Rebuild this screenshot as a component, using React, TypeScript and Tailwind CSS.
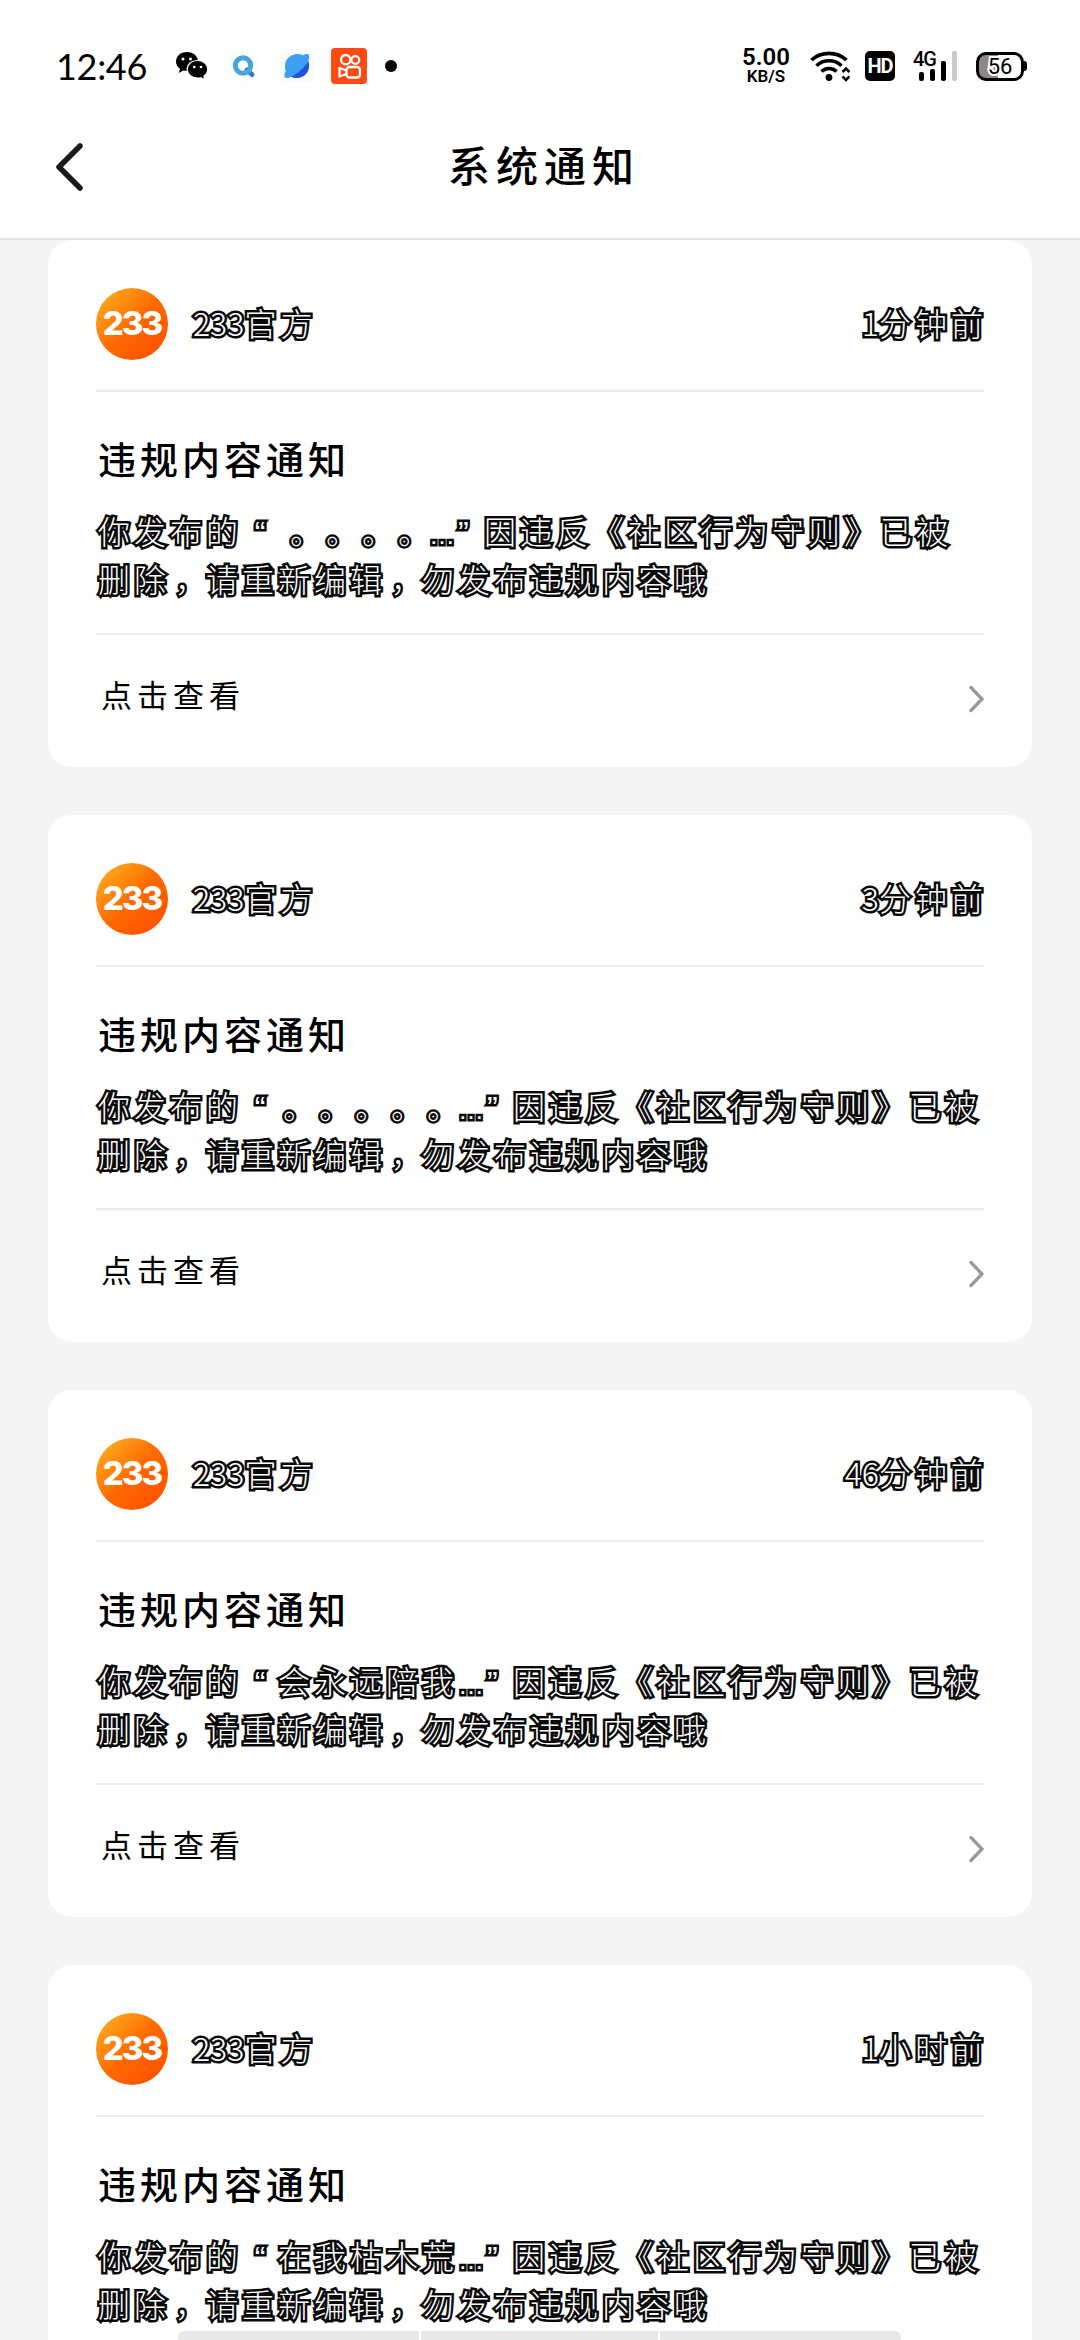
import type { ReactNode } from "react";

const notices = [
  { id: 1, num: "1", unit: "分钟前", excerpt: " 。。。。" },
  { id: 2, num: "3", unit: "分钟前", excerpt: "。。。。。" },
  { id: 3, num: "46", unit: "分钟前", excerpt: "会永远陪我" },
  { id: 4, num: "1", unit: "小时前", excerpt: "在我枯木荒" },
];

const outlined =
  "text-white text-[32px] font-light tracking-[4px] [-webkit-text-stroke:5px_#0a0a0a] [paint-order:stroke_fill] [stroke-linejoin:round]";

// punctuation gets a full-width cell so the columns stay aligned
function Mark({ children }: { children: ReactNode }) {
  return <span className="inline-block w-9 pl-[5px] leading-none">{children}</span>;
}

function Excerpt({ text }: { text: string }) {
  if (!text.includes("。")) return <>{text}</>;
  return (
    <>
      {text.split("").map((c, i) =>
        c === " " ? <span key={i} className="inline-block w-[7px]" /> : <Mark key={i}>{c}</Mark>,
      )}
    </>
  );
}

function WechatIcon() {
  return (
    <svg width="34" height="30" viewBox="0 0 34 30">
      <path d="M12 1C5.500 1 1 5.200 1 10.600c0 3 1.500 5.600 4 7.300L3.800 22l4.400-2.400c1.200.3 2.500.5 3.800.5 6.500 0 11-4.200 11-9.500S18.500 1 12 1Z" fill="#000" />
      <path d="M22.500 9.500c-6 0-10.300 3.900-10.300 8.800s4.300 8.800 10.300 8.800c1.200 0 2.300-.1 3.300-.4l4.100 2.200-1-3.700c2.400-1.600 3.900-4.100 3.900-6.900 0-4.900-4.300-8.800-10.300-8.800Z" fill="#000" stroke="#fff" strokeWidth="1.200" />
      <circle cx="8" cy="8" r="1.500" fill="#fff" />
      <circle cx="15.500" cy="8" r="1.500" fill="#fff" />
      <circle cx="19.300" cy="16" r="1.300" fill="#fff" />
      <circle cx="26" cy="16" r="1.300" fill="#fff" />
    </svg>
  );
}

function SearchIcon() {
  return (
    <svg width="34" height="34" viewBox="0 0 34 34">
      <rect x="1" y="1" width="32" height="32" rx="6" fill="#fdfdfd" />
      <path d="M20 21l5 4.500" stroke="#2f7fc4" strokeWidth="5" strokeLinecap="round" />
      <circle cx="16" cy="16.500" r="7.700" fill="none" stroke="#45a5dc" strokeWidth="5" />
    </svg>
  );
}

function BrowserIcon() {
  return (
    <svg width="36" height="36" viewBox="0 0 36 36">
      <rect x="1.500" y="1.500" width="33" height="33" rx="7" fill="#fafafa" />
      <path d="M29.500 6.500c-2-1-4.500 0-5.500.7C15.500 3.500 6 9 6 18c0 3 .8 5 .8 5-1.600 3-1.800 5.500-.8 6.500 1.500 1.200 4.500.2 6-.8 9 4 18-2 18-11 0-2.500-.8-4.500-.8-4.500 1.500-3 1.500-5.700.3-6.700Z" fill="#3ba0f4" />
      <path d="M29.200 13.200C26 19 19 25.500 12 28.700c9 4 18-2 18-11 0-2.500-.8-4.500-.8-4.500Z" fill="#1f55d8" />
    </svg>
  );
}

function KuaishouIcon() {
  return (
    <svg width="36" height="36" viewBox="0 0 36 36">
      <rect width="36" height="36" rx="4" fill="#fc4a12" />
      <g fill="none" stroke="#fff" strokeWidth="2.300" strokeLinejoin="round">
        <circle cx="14.700" cy="11.700" r="4.700" />
        <circle cx="24.300" cy="12" r="3.900" />
        <rect x="15.500" y="19" width="13.500" height="10.500" rx="3" />
        <path d="M15.500 22.500l-7-2.500v8.500l7-2.500" />
      </g>
    </svg>
  );
}

function WifiIcon() {
  return (
    <svg width="40" height="32" viewBox="0 0 40 32">
      <g fill="none" stroke="#000" strokeWidth="3.600">
        <path d="M1.500 10C11.500 1.200 26.500 1.200 36.500 10" />
        <path d="M6.500 15.700c7-6.600 18-6.600 25 0" />
        <path d="M11.500 21.500c4.300-4 10.700-4 15 0" />
      </g>
      <circle cx="19" cy="27.500" r="3.400" />
      <path d="M32.500 22l3.500-3.500 3.500 3.500M32.500 26.500l3.500 3.500 3.500-3.500" fill="none" stroke="#000" strokeWidth="2.600" />
    </svg>
  );
}

function StatusBar() {
  return (
    <div className="flex h-[132px] justify-between pl-[56px] pr-[53px] font-['Roboto',sans-serif] text-black">
      <div className="flex items-center">
        <span className="w-[119px] font-['Lato',sans-serif] text-[36px] tracking-[-0.300px]">12:46</span>
        <WechatIcon />
        <div className="ml-[18px]">
          <SearchIcon />
        </div>
        <div className="ml-[18px]">
          <BrowserIcon />
        </div>
        <div className="ml-[16px]">
          <KuaishouIcon />
        </div>
        <span className="ml-[18px] size-3 rounded-full bg-black" />
      </div>
      <div className="flex items-center">
        <div className="mr-[18px] flex w-[52px] flex-col items-center font-semibold">
          <span className="text-2xl leading-[21px]">5.00</span>
          <span className="text-[17px] leading-[17px]">KB/S</span>
        </div>
        <WifiIcon />
        <span className="ml-[15px] flex size-[30px] items-center justify-center rounded-[5px] bg-black text-[20px] leading-none font-bold tracking-[-1px] text-white">
          HD
        </span>
        <div className="relative ml-[18px] flex h-[30px] w-[46px] items-end gap-[6px] pl-[6px]">
          <span className="absolute -top-[1px] left-0 text-[20px] leading-[18px] font-medium tracking-[-1px]">4G</span>
          <i className="h-[9px] w-[5px] rounded-xs bg-black" />
          <i className="h-[12px] w-[5px] rounded-xs bg-black" />
          <i className="h-[20px] w-[5px] rounded-xs bg-black" />
          <i className="h-[30px] w-[5px] rounded-xs bg-[#c9c9c9]" />
        </div>
        <div className="ml-[17px] flex items-center">
          <div className="flex h-[29px] w-[48px] items-center justify-center rounded-[10px] border-[3px] border-black bg-linear-to-r from-[#8f8787] from-45% to-white to-45% text-[22px]">
            <span className="[-webkit-text-stroke:4px_#fff] [paint-order:stroke_fill]">56</span>
          </div>
          <i className="h-[10px] w-[3px] rounded-r-sm bg-black" />
        </div>
      </div>
    </div>
  );
}

function Header() {
  return (
    <header className="grid h-[108px] grid-cols-[1fr_auto_1fr] border-b-2 border-[#e2e2e2] bg-white">
      <svg className="mt-[9px] ml-[54px]" width="30" height="52" viewBox="0 0 30 52">
        <path d="M26 5L5 26l21 21" fill="none" stroke="#1a1a1a" strokeWidth="5.500" strokeLinecap="round" strokeLinejoin="round" />
      </svg>
      <h1 className="mt-[2px] pl-[8px] text-[42px] leading-[60px] font-medium tracking-[6px] text-black">系统通知</h1>
    </header>
  );
}

function Avatar() {
  return (
    <div className="flex size-[72px] items-center justify-center rounded-full bg-linear-to-br from-[#ffa81a] from-10% via-[#ff6a00] via-50% to-[#ff4800]">
      <span className="font-['Inter',sans-serif] text-[33px] font-extrabold tracking-[-2px] text-white">233</span>
    </div>
  );
}

function NoticeCard({ num, unit, excerpt }: { num: string; unit: string; excerpt: string }) {
  return (
    <section className="h-[527px] shrink-0 rounded-[24px] bg-white px-12 pt-12">
      <div className="flex h-[104px] items-start justify-between border-b-2 border-[#ebebeb]">
        <div className="flex items-center gap-[25px]">
          <Avatar />
          <p className={`${outlined} pb-1 leading-[68px]`}>
            <span className="tracking-normal">233</span>官方
          </p>
        </div>
        <p className={`${outlined} -mr-[3px] leading-[68px] whitespace-nowrap`}>
          <span className="tracking-normal">{num}</span>
          {unit}
        </p>
      </div>
      <div className="h-[243px] border-b-2 border-[#ebebeb] pt-[38px] pl-[2px]">
        <h2 className="text-[38px] leading-[56px] font-medium tracking-[4px] text-black">违规内容通知</h2>
        <p className={`${outlined} mt-[20px] leading-[48px] whitespace-nowrap`}>
          你发布的
          <span className="inline-block w-9 text-center font-['Liberation_Sans'] leading-none tracking-normal">“</span>
          <Excerpt text={excerpt} />
          <span className="inline-block w-[25px] font-['Liberation_Sans'] text-[26px] leading-none tracking-[-4px]">…</span>
          <span className="inline-block w-[30px] pl-[4px] font-['Liberation_Sans'] leading-none tracking-normal">”</span>
          因违反《社区行为守则》已被
          <br />
          删除<Mark>，</Mark>请重新编辑<Mark>，</Mark>勿发布违规内容哦
        </p>
      </div>
      <div className="flex h-[120px] items-center justify-between pl-[5px]">
        <span className="-mt-[2px] text-[31px] tracking-[5px] text-black">点击查看</span>
        <svg className="mt-[7px]" width="18" height="30" viewBox="0 0 18 30">
          <path d="M5 3.500L16 15 5 26.500" fill="none" stroke="#999" strokeWidth="3.300" strokeLinecap="round" />
        </svg>
      </div>
    </section>
  );
}

export default function App() {
  return (
    <div className="relative flex h-[2340px] w-[1080px] flex-col overflow-hidden bg-[#f4f4f4] font-['Noto_Sans_CJK_SC',sans-serif]">
      <div className="shrink-0 bg-white">
        <StatusBar />
        <Header />
      </div>
      <main className="flex min-h-0 flex-1 flex-col gap-12 overflow-hidden px-12">
        {notices.map((n) => (
          <NoticeCard key={n.id} num={n.num} unit={n.unit} excerpt={n.excerpt} />
        ))}
      </main>
      {/* gesture bar hints */}
      <div className="absolute bottom-0 left-[178px] flex h-[9px] w-[723px] gap-[2px] overflow-hidden rounded-t-md">
        <i className="w-[241px] bg-[#e8e8e8]" />
        <i className="w-[237px] bg-[#e8e8e8]" />
        <i className="flex-1 bg-[#e8e8e8]" />
      </div>
    </div>
  );
}
